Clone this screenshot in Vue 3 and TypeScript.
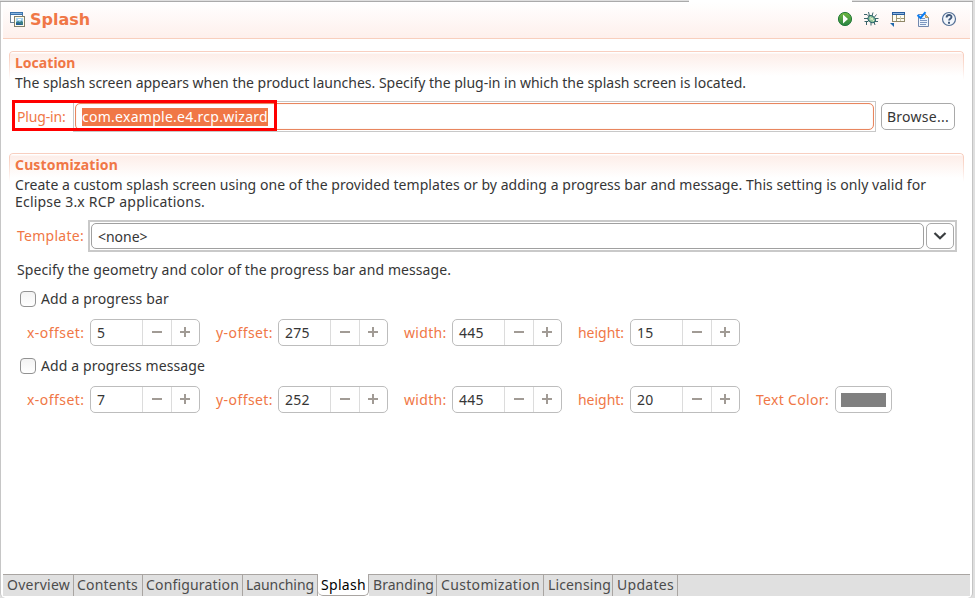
<script setup lang="ts">
import type { Directive } from 'vue'

interface Spin { label: string; labelWidth: number; value: string; valueWidth: number; kind: string }
interface Option { title: string; titleWidth: number; spins: Spin[]; color: boolean }
interface Tab { name: string; width: number; textWidth: number; active?: boolean }

// Tracks a run of text so that it fills the given width in pixels.
const vFit: Directive<HTMLElement, number> = {
  mounted(el, binding) {
    const n = (el.textContent ?? '').length
    const natural = el.getBoundingClientRect().width
    el.style.letterSpacing = `${(binding.value - natural) / n}px`
  },
}

const spins = (x: string, y: string, w: string, h: string): Spin[] => [
  { label: 'x-offset:', labelWidth: 57.5, value: x, valueWidth: x.length * 8.2, kind: 'x' },
  { label: 'y-offset:', labelWidth: 57, value: y, valueWidth: y.length * 8.2, kind: 'y' },
  { label: 'width:', labelWidth: 42.5, value: w, valueWidth: w.length * 8.2, kind: 'w' },
  { label: 'height:', labelWidth: 46, value: h, valueWidth: h.length * 8.2, kind: 'h' },
]

const options: Option[] = [
  { title: 'Add a progress bar', titleWidth: 128, spins: spins('5', '275', '445', '15'), color: false },
  { title: 'Add a progress message', titleWidth: 164, spins: spins('7', '252', '445', '20'), color: true },
]

const tabs: Tab[] = [
  { name: 'Overview', width: 71, textWidth: 63 },
  { name: 'Contents', width: 69, textWidth: 61 },
  { name: 'Configuration', width: 100, textWidth: 93 },
  { name: 'Launching', width: 75, textWidth: 68 },
  { name: 'Splash', width: 51, textWidth: 45, active: true },
  { name: 'Branding', width: 68, textWidth: 61 },
  { name: 'Customization', width: 107, textWidth: 99 },
  { name: 'Licensing', width: 69, textWidth: 63 },
  { name: 'Updates', width: 65, textWidth: 57 },
]
</script>

<template>
  <div class="window">
    <div class="top-edge"><i class="edge-left"></i><i class="edge-gap"></i><i class="edge-right"></i></div>
    <div class="editor">
      <header class="heading">
        <svg class="page-icon" width="16" height="16" viewBox="0 0 16 16">
          <rect x=".5" y=".5" width="12" height="10" fill="#fff" stroke="#6d8296" />
          <path d="M0 0h13v3H0z" fill="#3a73ae" /><path d="M1 1.5h11" stroke="#88b4de" />
          <rect x="4.5" y="4.5" width="10" height="10" fill="#fffbe9" stroke="#7f7f6a" />
          <rect x="6" y="6" width="7" height="7" fill="#a6d4f4" />
          <path d="M6 10l2-1 2 1 1.500-1.500L13 10v3H6z" fill="#3a7f86" /><path d="M6 13v-2l3 .5 4 1.500z" fill="#235a9b" />
          <path d="M8 7.500h3" stroke="#fff" />
        </svg>
        <h1><span v-fit="60">Splash</span></h1>
        <nav class="tools">
          <svg width="16" height="16" viewBox="0 0 16 16">
            <defs><linearGradient id="run" x2="0" y2="1"><stop stop-color="#71b83f" /><stop offset="1" stop-color="#278343" /></linearGradient></defs>
            <circle cx="8" cy="8" r="6.6" fill="url(#run)" stroke="#267b3b" />
            <path d="M6 3.500v9L11 8z" fill="#fff" />
          </svg>
          <svg width="16" height="16" viewBox="0 0 16 16">
            <path d="M5.500 1l1 4M10 1.500L9 5M1 3.500h3l2 2M1 7.500h4M1.500 10.500h3l2-2M3.500 14v-3l2-1M8 14.500V11M12 14l-1-3M15 10.500h-4M15.500 7.500h-4M13.500 3.500l-2 2.500" fill="none" stroke="#27535a" stroke-width=".9" />
            <ellipse cx="8.7" cy="8.2" rx="4" ry="3" transform="rotate(38 8.7 8.2)" fill="#91c39c" stroke="#28656a" />
            <path d="M7 6.500l4 3.500M7.500 8.500L10 7" stroke="#e5f3ce" />
          </svg>
          <svg width="16" height="16" viewBox="0 0 16 16">
            <rect x="3.500" y="1.500" width="12" height="9" fill="#fffdf1" stroke="#8f8768" />
            <path d="M3 1h13v3H3z" fill="#275d9e" /><path d="M4 2.500h11" stroke="#8fb5de" />
            <path d="M7.500 4v6M8 7.500h7" stroke="#a09774" /><path d="M11.500 5v5" stroke="#cfc8ab" />
            <path d="M1 12h4v4z" fill="#1f68ac" />
          </svg>
          <svg width="16" height="16" viewBox="0 0 16 16">
            <path d="M3.500 3.500h7l3 3v9h-10z" fill="#edf4fc" stroke="#7388ad" />
            <path d="M10.500 3.500v3h3z" fill="#e6c17b" stroke="#b89b66" />
            <path d="M5 7.500h5M5 9.500h7M5 11.500h7M5 13.500h6" stroke="#7d97c0" />
            <path d="M2.500 4l3 3L10.500 1.200" fill="none" stroke="#087df4" stroke-width="2" />
          </svg>
          <svg width="16" height="16" viewBox="0 0 16 16">
            <circle cx="8" cy="8" r="6.5" fill="#f2f6fb" stroke="#536f95" stroke-width="1.2" />
            <path d="M5.600 6.400C5.600 3.300 10.500 3.300 10.500 6c0 1.700-2.400 1.700-2.400 3.600" fill="none" stroke="#41597b" stroke-width="1.9" />
            <path d="M7 10.700h2v2H7z" fill="#41597b" />
          </svg>
        </nav>
      </header>

      <section class="section location">
        <h2><span v-fit="60.5">Location</span></h2>
        <p><span v-fit="731">The splash screen appears when the product launches. Specify the plug-in in which the splash screen is located.</span></p>
        <div class="plugin-row">
          <label class="link plugin-label"><span v-fit="48.5">Plug-in:</span></label>
          <div class="plugin-frame"><div class="plugin-input"><mark><span v-fit="186">com.example.e4.rcp.wizard</span></mark></div></div>
          <button class="browse"><span v-fit="62">Browse...</span></button>
          <i class="highlight"></i>
        </div>
      </section>

      <section class="section custom">
        <h2><span v-fit="103">Customization</span></h2>
        <p><span v-fit="911">Create a custom splash screen using one of the provided templates or by adding a progress bar and message. This setting is only valid for</span></p>
        <p><span v-fit="190">Eclipse 3.x RCP applications.</span></p>
        <div class="template-row">
          <label class="link template-label"><span v-fit="67">Template:</span></label>
          <div class="combo">
            <div class="combo-value"><span v-fit="49.5">&lt;none&gt;</span></div>
            <button class="combo-arrow">
              <svg width="14" height="8" viewBox="0 0 14 8"><path d="M1.500 1L7 6.300 12.500 1" fill="none" stroke="#393d3f" stroke-width="2.2" /></svg>
            </button>
          </div>
        </div>
        <p class="geometry"><span v-fit="434">Specify the geometry and color of the progress bar and message.</span></p>
        <div v-for="option in options" :key="option.title" class="option">
          <label class="check"><i class="box"></i><span v-fit="option.titleWidth">{{ option.title }}</span></label>
          <div class="spins">
            <div v-for="spin in option.spins" :key="spin.kind" class="field" :class="spin.kind">
              <label class="link"><span v-fit="spin.labelWidth">{{ spin.label }}</span></label>
              <div class="spinner">
                <div class="value"><span v-fit="spin.valueWidth">{{ spin.value }}</span></div>
                <div class="step"><i class="bar"></i></div>
                <div class="step"><i class="bar plus"></i></div>
              </div>
            </div>
            <div v-if="option.color" class="field color">
              <label class="link"><span v-fit="73">Text Color:</span></label>
              <button class="swatch"><i></i></button>
            </div>
          </div>
        </div>
      </section>

      <footer class="tabs">
        <div v-for="tab in tabs" :key="tab.name" class="tab" :class="{ active: tab.active }" :style="{ width: tab.width + 'px' }">
          <span v-fit="tab.textWidth">{{ tab.name }}</span>
        </div>
        <div class="tab-rest"></div>
      </footer>
    </div>
  </div>
</template>

<style>
body { margin: 0; background: #fff; overflow: hidden; }
</style>

<style scoped>
.window { box-sizing: border-box; width: 975px; height: 598px; background: #dfdfdf; font: 14px/17px "Noto Sans", sans-serif; color: #363636; display: flex; flex-direction: column; }
.window * { box-sizing: border-box; }
span { white-space: pre; display: inline-block; }
.top-edge { display: flex; height: 2px; flex: none; }
.top-edge i { border-bottom: 1px solid #aaa; }
.edge-left { width: 689px; }
.top-edge .edge-gap { width: 163px; background: #fff; border: 0; }
.edge-right { width: 121px; }
.editor { width: 973px; height: 596px; background: #fff; border-left: 1px solid #c6c6c6; border-right: 1px solid #c4c4c4; display: flex; flex-direction: column; border-radius: 0 0 5px 5px; }
.heading { margin: 0 2px; height: 37px; flex: none; background: linear-gradient(#fff, #fef0ec); border-bottom: 1px solid #f8cfbd; display: flex; align-items: center; padding: 0 13px 2px 7px; }
.page-icon { margin-right: 4px; margin-top: 2px; }
h1 { margin: 2px 0 0; font: bold 16px/20px "DejaVu Sans", sans-serif; color: #f07746; }
.tools { margin-left: auto; display: flex; gap: 10px; }
.section { position: relative; flex: none; margin: 0 8px; padding: 3px 6px 0; background: linear-gradient(#fff 0 2px, #fdeee9 3px, #fff 25px) no-repeat; }
.section::before { content: ""; position: absolute; inset: 0 0 auto 0; height: 28px; border: 1px solid #f8cfc0; border-bottom: 0; border-radius: 4px 4px 0 0; -webkit-mask: linear-gradient(#000 15%, transparent); mask: linear-gradient(#000 15%, transparent); }
.location { margin-top: 12px; height: 102px; }
.custom { height: 421px; }
h2 { margin: 0; font: bold 14px/18px "Noto Sans", sans-serif; color: #f07746; height: 20px; }
p { margin: 0; height: 17px; }
.link { color: #f07746; }
.plugin-row { position: relative; display: flex; margin-top: 10px; height: 31px; }
.plugin-label { width: 58px; padding: 7px 0 0 2px; }
.plugin-frame { width: 803px; height: 31px; padding: 1px; border: 1px solid #c8c8c8; }
.plugin-input { height: 27px; border: 1px solid #e8865f; border-radius: 5px; box-shadow: inset 0 0 1px #f5b69d; padding: 4px 6px; }
mark { display: block; width: 186px; height: 18px; background: #f07746; color: #fff; line-height: 18px; }
button { font: inherit; color: inherit; background: #fff; border: 1px solid #a9a9a9; border-radius: 5px; padding: 0; }
.browse { margin: 2px 0 0 5px; width: 74px; height: 27px; }
.highlight { position: absolute; left: -3px; top: -1px; width: 265px; height: 31px; border: 3px solid #f00; }
.template-row { display: flex; margin-top: 10px; height: 32px; }
.template-label { width: 73px; padding: 7px 0 0 2px; }
.combo { width: 869px; height: 32px; border: 2px solid #c9c9c9; padding: 1px; display: flex; gap: 2px; }
.combo-value { width: 833px; height: 26px; border: 1px solid #a0a0a0; border-radius: 5px; padding: 4px 6px; }
.combo-arrow { width: 28px; height: 26px; display: flex; align-items: center; justify-content: center; }
.geometry { margin: 9px 0 0 2px; }
.option { height: 67px; padding-top: 12px; }
.check { display: flex; height: 17px; padding-left: 5px; }
.box { width: 16px; height: 16px; margin: 1px 5px 0 0; border: 1px solid #929292; border-radius: 4px; background: linear-gradient(#f3f3f3, #fff); }
.spins { display: flex; margin-top: 12px; padding-left: 12px; }
.field { display: flex; height: 27px; }
.field .link { padding-top: 5px; }
.field.x { width: 188px; } .field.x .link { width: 63px; }
.field.y { width: 174px; } .field.y .link { width: 63px; padding-left: 1px; }
.field.w { width: 178px; } .field.w .link { width: 48px; }
.field.h { width: 178px; } .field.h .link { width: 52px; }
.field.y { width: 189px; }
.field.w { width: 174px; }
.field.color .link { width: 79px; }
.spinner { width: 110px; height: 27px; border: 1px solid #bdbdbd; border-radius: 5px; display: flex; }
.value { flex: none; width: 51px; padding: 4px 0 0 6px; }
.step { flex: none; width: 29px; border-left: 1px solid #dcdcdc; display: flex; align-items: center; justify-content: center; padding: 0 1px 1px 0; }
.step:last-child { width: 28px; }
.bar { position: relative; width: 10px; height: 2px; background: #a19b95; }
.plus::after { content: ""; position: absolute; left: 4px; top: -4px; width: 2px; height: 10px; background: #a19b95; }
.swatch { width: 57px; height: 27px; padding: 6px 5px; border-color: #bdbdbd; }
.swatch i { display: block; width: 45px; height: 14px; background: #808080; }
.tabs { margin: 0 2px; height: 24px; flex: none; display: flex; color: #4c4c4c; }
.tab { height: 22px; flex: none; background: #e0e0e0; border-top: 1px solid #a9a5a2; border-right: 1px solid #a9a5a2; padding: 1px 0 0 4px; }
.tab:nth-child(n + 2):nth-child(-n + 4) { padding-left: 3px; }
.tab.active { color: #000; background: #fff; border: 1px solid #a9a5a2; border-top: 0; border-left: 0; border-radius: 0 0 5px 5px; padding: 2px 0 0 3px; }
.tab-rest { flex: 1; height: 22px; background: #e0e0e0; border-top: 1px solid #a9a5a2; }
</style>
